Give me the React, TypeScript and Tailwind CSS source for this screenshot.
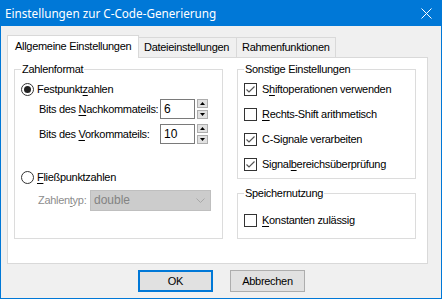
import React from "react";

const U = ({ children }: { children: React.ReactNode }) => (
  <span className="underline underline-offset-[2px] decoration-1">{children}</span>
);

function Radio({ checked }: { checked?: boolean }) {
  return (
    <span className="w-[13px] h-[13px] rounded-full border border-[#333333] bg-white flex items-center justify-center shrink-0">
      {checked && <span className="w-[7px] h-[7px] rounded-full bg-[#222222]" />}
    </span>
  );
}

function Check({ checked }: { checked?: boolean }) {
  return (
    <span className="w-[13px] h-[13px] border border-[#333333] bg-white flex items-center justify-center shrink-0">
      {checked && (
        <svg width="11" height="11" viewBox="0 0 11 11">
          <polyline points="1.5,5.5 4,8 9.5,2.5" fill="none" stroke="#555555" strokeWidth="1.2" />
        </svg>
      )}
    </span>
  );
}

function Spinner() {
  return (
    <div className="flex flex-col gap-[2px] ml-[2px]">
      <div className="w-[11px] h-[9px] border border-[#adadad] bg-[#e1e1e1] flex items-center justify-center">
        <svg width="5" height="3" viewBox="0 0 5 3">
          <polygon points="0,3 5,3 2.5,0" fill="#000" />
        </svg>
      </div>
      <div className="w-[11px] h-[9px] border border-[#adadad] bg-[#e1e1e1] flex items-center justify-center">
        <svg width="5" height="3" viewBox="0 0 5 3">
          <polygon points="0,0 5,0 2.5,3" fill="#000" />
        </svg>
      </div>
    </div>
  );
}

function Group({
  title,
  className,
  children,
}: {
  title: string;
  className: string;
  children: React.ReactNode;
}) {
  return (
    <fieldset className={`border border-[#dcdcdc] ${className}`}>
      <legend className="ml-[6px] px-[1px] h-[14px] leading-[14px]">{title}</legend>
      {children}
    </fieldset>
  );
}

export default function App() {
  return (
    <div className="w-[442px] h-[299px] bg-[#f0f0f0] border border-t-0 border-[#0078d7] flex flex-col text-[11px] tracking-[-0.3px] whitespace-nowrap text-black font-['Liberation_Sans',Arial,sans-serif] leading-[13px] overflow-hidden">
      {/* Title bar */}
      <div className="h-[26px] bg-[#0078d7] flex items-center justify-between pl-[4px] pr-[9px] text-white text-[12px] tracking-normal font-['Noto_Sans','Liberation_Sans',sans-serif]">
        <span className="text-[11.7px]">Einstellungen zur C-Code-Generierung</span>
        <svg width="11" height="11" viewBox="0 0 11 11">
          <path d="M0.5 0.5 L10.5 10.5 M10.5 0.5 L0.5 10.5" stroke="#ffffff" strokeWidth="1" />
        </svg>
      </div>

      {/* Tabs */}
      <div className="pl-[6px] pt-[9px] flex items-end h-[31px]">
        <div className="relative z-10 w-[132px] h-[23px] mb-[-1px] bg-white border border-b-0 border-[#d9d9d9] pl-[7px] pt-[4px]">
          Allgemeine Einstellungen
        </div>
        <div className="w-[98px] h-[20px] bg-[#f0f0f0] border border-b-0 border-l-0 border-[#d9d9d9] pl-[5px] pt-[3px]">
          Dateieinstellungen
        </div>
        <div className="w-[99px] h-[20px] bg-[#f0f0f0] border border-b-0 border-l-0 border-[#d9d9d9] pl-[5px] pt-[3px]">
          Rahmenfunktionen
        </div>
      </div>

      {/* Panel */}
      <div className="ml-[6px] w-[421px] h-[207px] bg-white border border-[#d9d9d9] flex gap-[14px] pl-[6px] pt-[4px]">
        <Group title="Zahlenformat" className="w-[209px] h-[177px]">
          <div className="flex flex-col">
            <div className="h-[13px] mt-[7px] flex items-center ml-[6px] gap-[3px]">
              <Radio checked />
              <span>
                Festpunkt<U>z</U>ahlen
              </span>
            </div>
            <div className="h-[20px] mt-[3px] flex items-center pl-[24px]">
              <span className="w-[121px]">
                Bits des <U>N</U>achkommateils:
              </span>
              <div className="w-[35px] h-[20px] border border-[#7a7a7a] bg-white pl-[3px] flex items-center text-[12px] tracking-normal">6</div>
              <Spinner />
            </div>
            <div className="h-[20px] mt-[5px] flex items-center pl-[24px]">
              <span className="w-[121px]">
                Bits des <U>V</U>orkommateils:
              </span>
              <div className="w-[35px] h-[20px] border border-[#7a7a7a] bg-white pl-[3px] flex items-center text-[12px] tracking-normal">10</div>
              <Spinner />
            </div>
            <div className="h-[13px] mt-[27px] flex items-center ml-[6px] gap-[3px]">
              <Radio />
              <span>
                <U>F</U>ließpunktzahlen
              </span>
            </div>
            <div className="h-[21px] mt-[6px] flex items-center pl-[23px] text-[#8d8d8d]">
              <span className="w-[52px]">
                Zahlen<U>t</U>yp:
              </span>
              <div className="w-[121px] h-[21px] bg-[#cccccc] border border-[#bfbfbf] flex items-center justify-between pl-[3px] pr-[5px] text-[#838383] text-[12px] tracking-normal">
                <span>double</span>
                <svg width="9" height="5" viewBox="0 0 9 5">
                  <polyline points="0.5,0.5 4.5,4.5 8.5,0.5" fill="none" stroke="#a8a8a8" strokeWidth="1" />
                </svg>
              </div>
            </div>
          </div>
        </Group>

        <div className="flex flex-col gap-[7px]">
          <Group title="Sonstige Einstellungen" className="w-[179px] h-[117px]">
            <div className="flex flex-col gap-[12px] mt-[7px] ml-[6px]">
              <div className="h-[13px] flex items-center gap-[5px]">
                <Check checked />
                <span>
                  S<U>h</U>iftoperationen verwenden
                </span>
              </div>
              <div className="h-[13px] flex items-center gap-[5px]">
                <Check />
                <span>
                  <U>R</U>echts-Shift arithmetisch
                </span>
              </div>
              <div className="h-[13px] flex items-center gap-[5px]">
                <Check checked />
                <span>C-Signale verarbeiten</span>
              </div>
              <div className="h-[13px] flex items-center gap-[5px]">
                <Check checked />
                <span>
                  Signal<U>b</U>ereichsüberprüfung
                </span>
              </div>
            </div>
          </Group>
          <Group title="Speichernutzung" className="w-[179px] h-[53px]">
            <div className="h-[13px] mt-[14px] ml-[6px] flex items-center gap-[5px]">
              <Check />
              <span>
                <U>K</U>onstanten zulässig
              </span>
            </div>
          </Group>
        </div>
      </div>

      {/* Buttons */}
      <div className="flex pl-[137px] mt-[6px] gap-[17px]">
        <div className="w-[75px] h-[22px] bg-[#e1e1e1] border-2 border-[#0078d7] flex items-center justify-center">
          OK
        </div>
        <div className="w-[75px] h-[22px] bg-[#e1e1e1] border border-[#adadad] flex items-center justify-center">
          Abbrechen
        </div>
      </div>
    </div>
  );
}
